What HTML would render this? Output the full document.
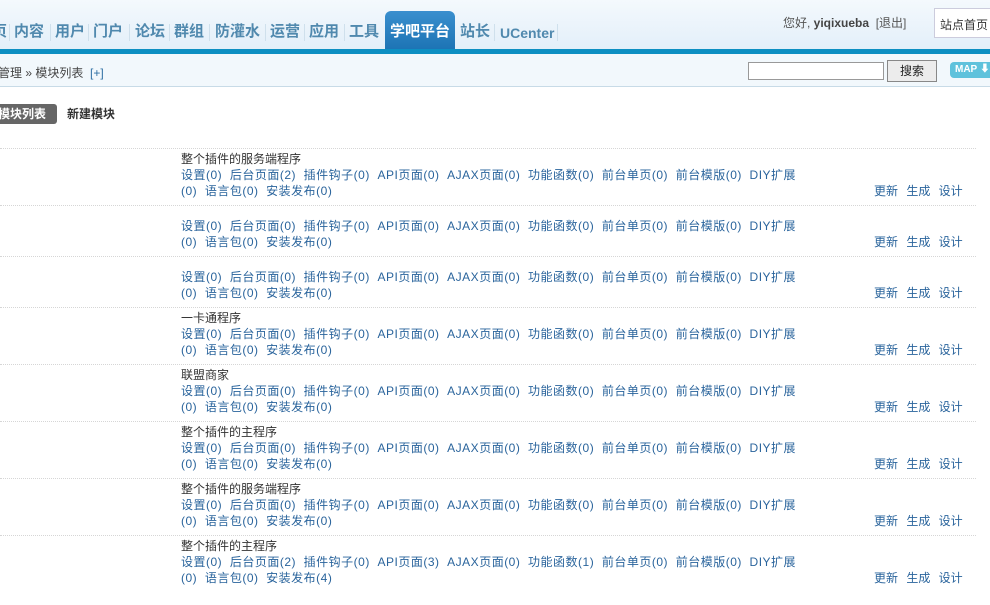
<!DOCTYPE html>
<html><head><meta charset="utf-8"><style>
*{margin:0;padding:0;box-sizing:border-box}
body{width:990px;height:605px;overflow:hidden;background:#fff;font:12px "Liberation Sans","Noto Sans CJK SC",sans-serif;color:#333;position:relative}
.hd{position:absolute;left:0;top:0;width:990px;height:49px;background:linear-gradient(#f4f9fd,#e3eff9)}
.bar{position:absolute;left:0;top:49px;width:990px;height:5px;background:#0d8fc2}
.n{position:absolute;top:23px;font-size:15px;font-weight:bold;color:#5089ae;line-height:18px;white-space:nowrap}
.s{position:absolute;top:24px;width:1px;height:17px;background:#cfe0ec}
.act{position:absolute;left:385px;top:11px;width:70px;height:38px;background:linear-gradient(#3a8fce,#1d74b5);border-radius:6px 6px 0 0;color:#fff;font-size:15px;font-weight:bold;text-align:center;line-height:42px}
.user{position:absolute;top:14px;left:783px;font-size:12px;color:#555}
.user b{color:#444}
.site{position:absolute;left:934px;top:8px;width:60px;height:30px;border:1px solid #ccd;background:#fff;padding:7px 0 0 5px;font-size:12px}
.bc{position:absolute;top:54px;left:0;width:990px;height:33px;background:#f2f8fc;border-bottom:1px solid #c8dbe7}
.bc .t{position:absolute;left:-2px;top:10px;color:#444}
.bc .t i{font-style:normal;color:#2f6fa3}
.inp{position:absolute;left:748px;top:8px;width:136px;height:18px;border:1px solid #999;background:#fff}
.btn{position:absolute;left:887px;top:6px;width:50px;height:22px;background:#ececec;border:1px solid #888;text-align:center;line-height:20px;color:#222}
.map{position:absolute;left:950px;top:8px;width:44px;height:16px;background:#5fc2dc;border-radius:4px;color:#fff;font-size:10px;font-weight:bold;padding-left:5px;line-height:16px}
.tab1{position:absolute;left:-4px;top:104px;width:61px;height:20px;background:#666;color:#fff;font-weight:bold;border-radius:0 3px 3px 0;line-height:20px;padding-left:2px;font-size:12px}
.tab2{position:absolute;left:67px;top:104px;line-height:20px;font-weight:bold;color:#333}
.sep{position:absolute;left:0;width:976px;border-top:1px dotted #d6d6d6}
.row{position:absolute;left:181px;line-height:16px;white-space:nowrap}
.row a{color:#2a649c;text-decoration:none;letter-spacing:0.5px}
.r{position:absolute;left:874px;color:#2a649c;word-spacing:5px;line-height:16px}
</style></head><body>
<div class="hd"></div>
<div class="n" style="left:-8px">页</div><div class="s" style="left:9px"></div>
<div class="n" style="left:14px">内容</div><div class="s" style="left:50px"></div>
<div class="n" style="left:55px">用户</div><div class="s" style="left:88px"></div>
<div class="n" style="left:93px">门户</div><div class="s" style="left:129px"></div>
<div class="n" style="left:135px">论坛</div><div class="s" style="left:169px"></div>
<div class="n" style="left:174px">群组</div><div class="s" style="left:209px"></div>
<div class="n" style="left:215px">防灌水</div><div class="s" style="left:265px"></div>
<div class="n" style="left:270px">运营</div><div class="s" style="left:304px"></div>
<div class="n" style="left:309px">应用</div><div class="s" style="left:344px"></div>
<div class="n" style="left:349px">工具</div>
<div class="act">学吧平台</div>
<div class="n" style="left:460px">站长</div><div class="s" style="left:494px"></div>
<div class="n" style="left:500px;font-size:14px;top:24px">UCenter</div><div class="s" style="left:557px"></div>
<div class="bar"></div>
<div class="user">您好, <b>yiqixueba</b> &nbsp;[退出]</div>
<div class="site">站点首页</div>
<div class="bc"><div class="t">管理 » 模块列表 &nbsp;<i>[+]</i></div><div class="inp"></div><div class="btn">搜索</div><div class="map">MAP ⬇</div></div>
<div class="tab1">模块列表</div><div class="tab2">新建模块</div>

<div class="sep" style="top:148px"></div>
<div class="row" style="top:151px">整个插件的服务端程序<br><a>设置(0)&nbsp; 后台页面(2)&nbsp; 插件钩子(0)&nbsp; API页面(0)&nbsp; AJAX页面(0)&nbsp; 功能函数(0)&nbsp; 前台单页(0)&nbsp; 前台模版(0)&nbsp; DIY扩展<br>(0)&nbsp; 语言包(0)&nbsp; 安装发布(0)</a></div>
<div class="r" style="top:183px">更新 生成 设计</div>

<div class="sep" style="top:205px"></div>
<div class="row" style="top:218px"><a>设置(0)&nbsp; 后台页面(0)&nbsp; 插件钩子(0)&nbsp; API页面(0)&nbsp; AJAX页面(0)&nbsp; 功能函数(0)&nbsp; 前台单页(0)&nbsp; 前台模版(0)&nbsp; DIY扩展<br>(0)&nbsp; 语言包(0)&nbsp; 安装发布(0)</a></div>
<div class="r" style="top:234px">更新 生成 设计</div>

<div class="sep" style="top:256px"></div>
<div class="row" style="top:269px"><a>设置(0)&nbsp; 后台页面(0)&nbsp; 插件钩子(0)&nbsp; API页面(0)&nbsp; AJAX页面(0)&nbsp; 功能函数(0)&nbsp; 前台单页(0)&nbsp; 前台模版(0)&nbsp; DIY扩展<br>(0)&nbsp; 语言包(0)&nbsp; 安装发布(0)</a></div>
<div class="r" style="top:285px">更新 生成 设计</div>

<div class="sep" style="top:307px"></div>
<div class="row" style="top:310px">一卡通程序<br><a>设置(0)&nbsp; 后台页面(0)&nbsp; 插件钩子(0)&nbsp; API页面(0)&nbsp; AJAX页面(0)&nbsp; 功能函数(0)&nbsp; 前台单页(0)&nbsp; 前台模版(0)&nbsp; DIY扩展<br>(0)&nbsp; 语言包(0)&nbsp; 安装发布(0)</a></div>
<div class="r" style="top:342px">更新 生成 设计</div>

<div class="sep" style="top:364px"></div>
<div class="row" style="top:367px">联盟商家<br><a>设置(0)&nbsp; 后台页面(0)&nbsp; 插件钩子(0)&nbsp; API页面(0)&nbsp; AJAX页面(0)&nbsp; 功能函数(0)&nbsp; 前台单页(0)&nbsp; 前台模版(0)&nbsp; DIY扩展<br>(0)&nbsp; 语言包(0)&nbsp; 安装发布(0)</a></div>
<div class="r" style="top:399px">更新 生成 设计</div>

<div class="sep" style="top:421px"></div>
<div class="row" style="top:424px">整个插件的主程序<br><a>设置(0)&nbsp; 后台页面(0)&nbsp; 插件钩子(0)&nbsp; API页面(0)&nbsp; AJAX页面(0)&nbsp; 功能函数(0)&nbsp; 前台单页(0)&nbsp; 前台模版(0)&nbsp; DIY扩展<br>(0)&nbsp; 语言包(0)&nbsp; 安装发布(0)</a></div>
<div class="r" style="top:456px">更新 生成 设计</div>

<div class="sep" style="top:478px"></div>
<div class="row" style="top:481px">整个插件的服务端程序<br><a>设置(0)&nbsp; 后台页面(0)&nbsp; 插件钩子(0)&nbsp; API页面(0)&nbsp; AJAX页面(0)&nbsp; 功能函数(0)&nbsp; 前台单页(0)&nbsp; 前台模版(0)&nbsp; DIY扩展<br>(0)&nbsp; 语言包(0)&nbsp; 安装发布(0)</a></div>
<div class="r" style="top:513px">更新 生成 设计</div>

<div class="sep" style="top:535px"></div>
<div class="row" style="top:538px">整个插件的主程序<br><a>设置(0)&nbsp; 后台页面(2)&nbsp; 插件钩子(0)&nbsp; API页面(3)&nbsp; AJAX页面(0)&nbsp; 功能函数(1)&nbsp; 前台单页(0)&nbsp; 前台模版(0)&nbsp; DIY扩展<br>(0)&nbsp; 语言包(0)&nbsp; 安装发布(4)</a></div>
<div class="r" style="top:570px">更新 生成 设计</div>
</body></html>
